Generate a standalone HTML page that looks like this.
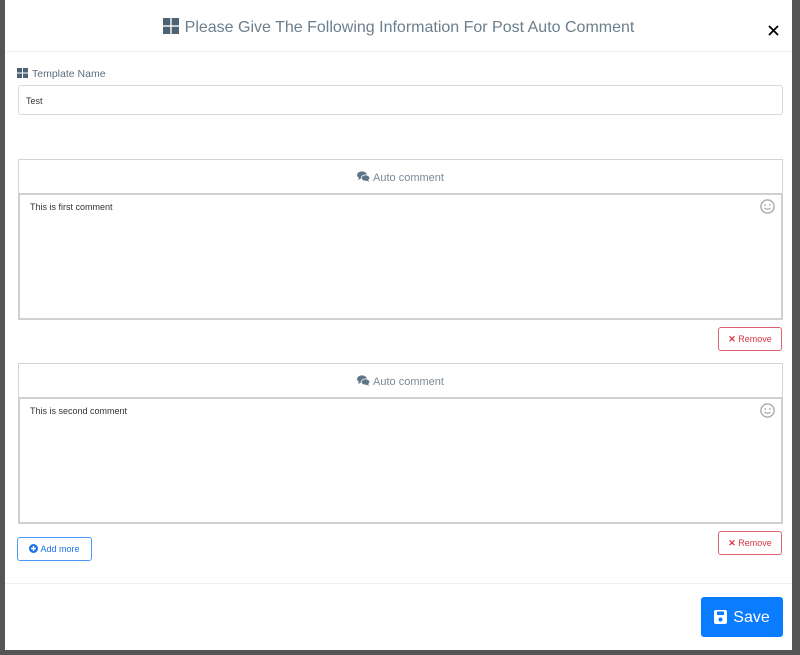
<!DOCTYPE html>
<html><head><style>
*{box-sizing:border-box;margin:0;padding:0}
body{width:800px;height:655px;background:#555;font-family:"Liberation Sans",sans-serif;position:relative;overflow:hidden}
.m{position:absolute;left:5px;top:0;width:787px;height:650px;background:#fff}
.a{position:absolute}
.hdr{left:0;top:0;width:787px;height:52px;border-bottom:1px solid #eef0f2;text-align:center;font-size:16px;color:#6b7e8d;line-height:56px}
.box{border:1px solid #d4d4d4}
.ta{border:2px solid #d0d0d0;background:#fff;font-size:9px;color:#333;padding:7px 10px}
.ph{text-align:center;font-size:11px;color:#7a8a98}
.rm{border:1px solid #e06070;border-radius:3px;color:#dc3545;font-size:9px;text-align:center;line-height:22px}
</style></head><body>
<div class="m">
<div class="a hdr"><svg width="16" height="16" viewBox="0 0 16 16" style="vertical-align:-2px;margin-right:6px"><g fill="#4d6374"><rect x="0" y="0" width="7.3" height="7.3"/><rect x="8.7" y="0" width="7.3" height="7.3"/><rect x="0" y="8.7" width="7.3" height="7.3"/><rect x="8.7" y="8.7" width="7.3" height="7.3"/></g></svg>Please Give The Following Information For Post Auto Comment</div>
<svg class="a" style="left:763px;top:25px" width="11" height="11" viewBox="0 0 11 11"><path d="M1 1L10 10M10 1L1 10" stroke="#000" stroke-width="1.8"/></svg>
<div class="a" style="left:12px;top:68px;font-size:10.5px;color:#5c6f7f"><svg width="11" height="10" viewBox="0 0 11 10" style="vertical-align:-1px;margin-right:4px"><g fill="#4d6374"><rect x="0" y="0" width="5" height="4.5"/><rect x="6" y="0" width="5" height="4.5"/><rect x="0" y="5.5" width="5" height="4.5"/><rect x="6" y="5.5" width="5" height="4.5"/></g></svg>Template Name</div>
<div class="a" style="left:13px;top:85px;width:765px;height:30px;border:1px solid #d8d8e0;border-radius:3px;font-size:9px;padding:10px 7px;color:#333">Test</div>

<div class="a box" style="left:13px;top:159px;width:765px;height:161px"></div>
<div class="a ph" style="left:13px;top:171px;width:765px"><svg width="13" height="11" viewBox="0 0 13 11" style="vertical-align:-1px;margin-right:3px"><ellipse cx="5" cy="4" rx="5" ry="3.6" fill="#5f7585"/><path d="M2 6.5L1 9L4.5 7.3Z" fill="#5f7585"/><ellipse cx="8.5" cy="7" rx="4.3" ry="3.1" fill="#5f7585" stroke="#fff" stroke-width="0.8"/><path d="M11 9L12.5 10.8L9 9.8Z" fill="#5f7585"/></svg>Auto comment</div>
<div class="a ta" style="left:13px;top:193px;width:765px;height:127px">This is first comment</div>
<svg class="a" style="left:755px;top:199px" width="15" height="15" viewBox="0 0 15 15"><circle cx="7.5" cy="7.5" r="6.6" fill="none" stroke="#aaa" stroke-width="1.4"/><circle cx="5.2" cy="6" r="0.9" fill="#aaa"/><circle cx="9.8" cy="6" r="0.9" fill="#aaa"/><path d="M4.5 9Q7.5 11.8 10.5 9" fill="none" stroke="#aaa" stroke-width="1.2"/></svg>
<div class="a rm" style="left:713px;top:327px;width:64px;height:24px"><b>✕</b> Remove</div>

<div class="a box" style="left:13px;top:363px;width:765px;height:161px"></div>
<div class="a ph" style="left:13px;top:375px;width:765px"><svg width="13" height="11" viewBox="0 0 13 11" style="vertical-align:-1px;margin-right:3px"><ellipse cx="5" cy="4" rx="5" ry="3.6" fill="#5f7585"/><path d="M2 6.5L1 9L4.5 7.3Z" fill="#5f7585"/><ellipse cx="8.5" cy="7" rx="4.3" ry="3.1" fill="#5f7585" stroke="#fff" stroke-width="0.8"/><path d="M11 9L12.5 10.8L9 9.8Z" fill="#5f7585"/></svg>Auto comment</div>
<div class="a ta" style="left:13px;top:397px;width:765px;height:127px">This is second comment</div>
<svg class="a" style="left:755px;top:403px" width="15" height="15" viewBox="0 0 15 15"><circle cx="7.5" cy="7.5" r="6.6" fill="none" stroke="#aaa" stroke-width="1.4"/><circle cx="5.2" cy="6" r="0.9" fill="#aaa"/><circle cx="9.8" cy="6" r="0.9" fill="#aaa"/><path d="M4.5 9Q7.5 11.8 10.5 9" fill="none" stroke="#aaa" stroke-width="1.2"/></svg>
<div class="a rm" style="left:713px;top:531px;width:64px;height:24px"><b>✕</b> Remove</div>
<div class="a" style="left:12px;top:537px;width:75px;height:24px;border:1px solid #4a9af5;border-radius:3px;color:#1a73e8;font-size:9px;text-align:center;line-height:22px"><svg width="9" height="9" viewBox="0 0 9 9" style="vertical-align:-1px"><circle cx="4.5" cy="4.5" r="4.5" fill="#1a73e8"/><path d="M4.5 2V7M2 4.5H7" stroke="#fff" stroke-width="1.4"/></svg> Add more</div>

<div class="a" style="left:0;top:583px;width:787px;border-top:1px solid #eef0f2"></div>
<div class="a" style="left:696px;top:597px;width:82px;height:40px;background:#0a7cff;border-radius:3px;color:#fff;font-size:16px;line-height:42px;text-align:center"><svg width="13" height="14" viewBox="0 0 13 14" style="vertical-align:-2px;margin-right:6px"><rect x="0" y="0" width="13" height="14" rx="2" fill="#fff"/><rect x="3" y="1.5" width="7" height="3.5" fill="#0a7cff"/><circle cx="6.5" cy="9.5" r="2" fill="#0a7cff"/></svg>Save</div>
</div>
</body></html>
